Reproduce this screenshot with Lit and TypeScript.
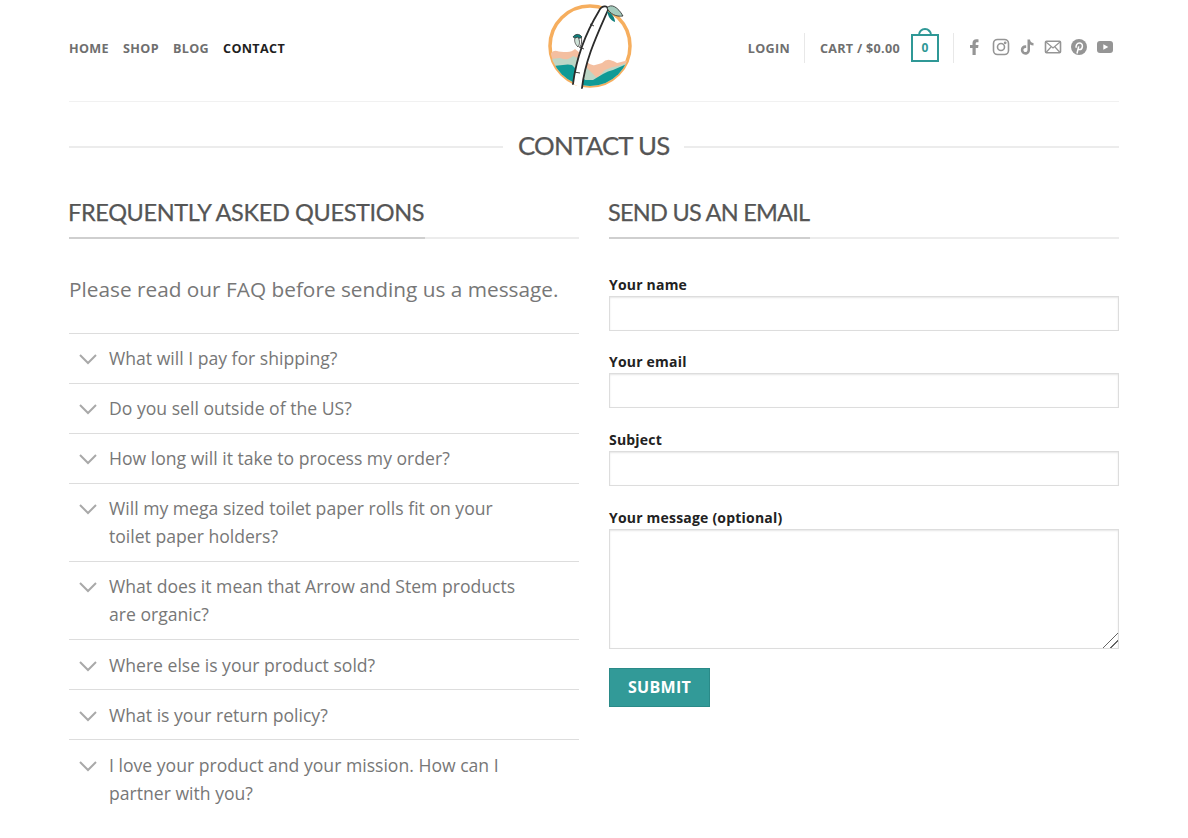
import { LitElement, html, css, svg } from 'lit';
import { customElement } from 'lit/decorators.js';

const FAQ = [
  ['What will I pay for shipping?'],
  ['Do you sell outside of the US?'],
  ['How long will it take to process my order?'],
  ['Will my mega sized toilet paper rolls fit on your', 'toilet paper holders?'],
  ['What does it mean that Arrow and Stem products', 'are organic?'],
  ['Where else is your product sold?'],
  ['What is your return policy?'],
  ['I love your product and your mission. How can I', 'partner with you?'],
];

const FIELDS = ['Your name', 'Your email', 'Subject'];

const logo = svg`
  <svg width="86" height="92" viewBox="0 0 86 92">
    <defs><clipPath id="disc"><circle cx="43" cy="46" r="40"/></clipPath></defs>
    <circle cx="43" cy="46" r="40" fill="#fff" stroke="#f6ae5e" stroke-width="3.5"/>
    <g clip-path="url(#disc)">
      <path d="M4 53 Q7 50 10 51 T20 52 Q25 52 28 49 L33 53 L40 62 Q44 66 48 65 T55 63 Q59 59 63 60 T70 63 L82 60 V92 H0Z" fill="#f4bfa0"/>
      <path d="M4 59 L13 58 Q18 60 21 59 T26 56 L33 59 L40 68 L50 78 L58 70 Q64 67 71 66 L82 62 V92 H0Z" fill="#bcd6c6"/>
      <path d="M6 66 L16 65 Q21 64 25 65 L30 70 L38 80 L46 80 L56 74 Q61 71 66 70 L82 63 V92 H0Z" fill="#0f9a96"/>
    </g>
    <path d="M26 84 C29 60 38 34 52 11 C54 6 61 4 61 10 C50 35 38 60 35 88 Z" fill="#fff"/>
    <path d="M26 84 C29 60 38 34 52 11 C54 6 61 4 61 10 C50 35 38 60 35 88" fill="none" stroke="#2b2b2b" stroke-width="1.800" stroke-linecap="round"/>
    <path d="M43 24 L47 26 M32 47 L37 49 M27 72 L33 73" stroke="#2b2b2b" stroke-width=".9"/>
    <path d="M60 8 C64 3 71 7 76 16 C69 17 63 14 60 8Z" fill="#a5cbbd" stroke="#2b2b2b" stroke-width=".8"/>
    <path d="M60 11 C65 13 68 18 68 22 C63 20 61 16 60 11Z" fill="#0f7f7c"/>
    <path d="M35 37 C32 33 28 34 26 37 C29 39 32 39 35 37Z" fill="#0f7f7c" stroke="#2b2b2b" stroke-width=".7"/>
    <path d="M28 38 C27 41 28 44 31 47 C33 44 33 41 31 37Z" fill="#cfe2d8" stroke="#2b2b2b" stroke-width=".7"/>
    <path d="M33 47 C35 44 35 40 34 37" fill="none" stroke="#2b2b2b" stroke-width=".8"/>
  </svg>`;

@customElement('app-root')
export class AppRoot extends LitElement {
  static styles = css`
    :host {
      display: block;
      height: 838px;
      overflow: hidden;
      background: #fff;
      font-family: 'Open Sans', 'Noto Sans', sans-serif;
      color: #777;
    }

    .page {
      width: 1050px;
      margin-left: 69px;
    }

    .header {
      height: 101px;
      border-bottom: 1px solid #f1f1f1;
      display: grid;
      grid-template-columns: 1fr 100px 1fr;
      align-items: center;
    }

    .nav {
      display: flex;
      gap: 14px;
      font-size: 12.6px;
      font-weight: 700;
      letter-spacing: 0.35px;
      color: #6f6f6f;
      margin-top: -4px;
    }

    .nav .active {
      color: #1f1f1f;
    }

    .logo {
      display: flex;
      justify-content: center;
      margin-top: -9px;
      margin-left: -8px;
    }

    .right {
      display: flex;
      align-items: center;
      justify-content: flex-end;
      margin-top: -6px;
      margin-right: 5px;
      font-size: 12.6px;
      font-weight: 700;
      letter-spacing: 0.3px;
      color: #6f6f6f;
      white-space: nowrap;
    }

    .label {
      margin-top: 2px;
    }

    .divider {
      width: 1px;
      height: 30px;
      background: #e8e8e8;
      margin: 0 15px 0 14px;
    }

    .divider.second {
      margin: 0 12px 0 14px;
    }

    .cart-icon {
      position: relative;
      width: 28px;
      height: 28px;
      border: 2px solid #2f9896;
      box-sizing: border-box;
      margin-left: 11px;
      display: flex;
      align-items: center;
      justify-content: center;
      color: #2f9896;
      font-size: 12px;
      letter-spacing: 0;
    }

    .cart-icon::before {
      content: '';
      position: absolute;
      left: 5px;
      top: -8px;
      width: 10px;
      height: 6px;
      border: 2px solid #2f9896;
      border-bottom: 0;
      border-radius: 7px 7px 0 0;
    }

    .social {
      display: flex;
      align-items: center;
      gap: 8px;
      margin-top: -2px;
    }

    .social svg {
      display: block;
      width: 18px;
      height: 18px;
    }

    .title {
      display: flex;
      align-items: center;
      gap: 15px;
      margin: 25px 0 0;
      height: 36px;
      font-family: 'Lato', sans-serif;
      font-weight: 400;
      font-size: 25.8px;
      letter-spacing: -0.75px;
      color: #555;
      white-space: nowrap;
      -webkit-text-stroke: 0.25px #555;
    }

    .title::before,
    .title::after {
      content: '';
      height: 2px;
      background: #ececec;
      margin-top: 4px;
    }

    .title::before {
      flex: none;
      width: 434px;
    }

    .title::after {
      flex: 1;
    }

    .columns {
      display: grid;
      grid-template-columns: 510px 510px;
      gap: 30px;
      margin-top: 29px;
    }

    .section-title {
      border-bottom: 2px solid #ececec;
      height: 45px;
    }

    .section-title span {
      display: inline-block;
      height: 45px;
      line-height: 40px;
      padding-right: 1px;
      border-bottom: 2px solid #cfcfcf;
      font-family: 'Lato', sans-serif;
      font-size: 23.5px;
      letter-spacing: -0.8px;
      color: #555;
      white-space: nowrap;
      text-indent: -1px;
      -webkit-text-stroke: 0.25px #555;
    }

    .section-title span.wide {
      letter-spacing: -0.36px;
    }

    .section-title span.tight {
      letter-spacing: -0.74px;
    }

    .lead {
      font-size: 20.8px;
      line-height: 32px;
      color: #777;
      margin: 34px 0 28px;
      white-space: nowrap;
    }

    .faq-row {
      display: flex;
      border-top: 1px solid #ddd;
      padding: 10px 0 11px;
      font-size: 17.6px;
      line-height: 28px;
      color: #777;
    }

    .faq-row:nth-child(n + 8) {
      padding: 11px 0 10px;
    }

    .faq-row svg {
      width: 20px;
      height: 12px;
      margin: 9px 11px 0 9px;
      flex: none;
    }

    .faq-row div {
      white-space: nowrap;
    }

    form {
      display: block;
      margin-top: 36px;
    }

    label {
      display: block;
      font-size: 14px;
      font-weight: 700;
      line-height: 20px;
      letter-spacing: 0.2px;
      color: #222;
      margin-bottom: 1px;
    }

    input,
    textarea {
      display: block;
      width: 100%;
      box-sizing: border-box;
      border: 1px solid #ddd;
      box-shadow: inset 0 1px 2px rgba(0, 0, 0, 0.1);
      background: #fff;
      border-radius: 0;
      margin: 0;
      padding: 0 10px;
      outline: none;
    }

    input {
      height: 35px;
      margin-bottom: 22px;
    }

    .field:first-child input {
      margin-bottom: 21px;
    }

    textarea {
      height: 120px;
      resize: vertical;
    }

    textarea::-webkit-resizer {
      background: linear-gradient(
        135deg,
        transparent 0 48%,
        #666 48% 53%,
        transparent 53% 72%,
        #666 72% 77%,
        transparent 77%
      );
    }

    button {
      display: block;
      margin-top: 19px;
      width: 101px;
      height: 39px;
      border: 1px solid #2a8a88;
      background: #329a98;
      color: #fff;
      font-family: inherit;
      font-size: 16px;
      font-weight: 700;
      letter-spacing: 0.3px;
      padding: 0 0 2px;
    }
  `;

  render() {
    return html`
      <div class="page">
        <header class="header">
          <nav class="nav">
            <span>HOME</span><span>SHOP</span><span>BLOG</span><span class="active">CONTACT</span>
          </nav>
          <div class="logo">${logo}</div>
          <div class="right">
            <span class="label">LOGIN</span>
            <span class="divider"></span>
            <span class="label">CART / $0.00</span>
            <span class="cart-icon">0</span>
            <span class="divider second"></span>
            <div class="social">
              <svg viewBox="0 0 18 18" fill="#959595"><path d="M6.500 17V10H4V7H6.500V5C6.500 2.800 8 1.300 10.300 1.300c1 0 1.900.1 2.200.1v2.800h-1.500C10 4.200 9.700 4.800 9.700 5.600V7h2.800l-.4 3H9.700v7Z"/></svg>
              <svg viewBox="0 0 18 18" fill="none" stroke="#959595" stroke-width="1.600"><rect x="1.500" y="1.500" width="15" height="15" rx="4"/><circle cx="9" cy="9" r="3.500"/><circle cx="13.200" cy="4.800" r=".6" fill="#959595"/></svg>
              <svg viewBox="0 0 18 18" fill="#959595"><path d="M9.500 1.500h2.500c.2 2 1.500 3.400 3.500 3.600v2.500c-1.300 0-2.500-.4-3.500-1.100v5.400c0 2.900-2.100 4.800-4.700 4.800C4.800 16.700 2.800 14.700 2.800 12c0-2.900 2.400-5 5.400-4.600v2.700c-1.500-.4-2.800.6-2.800 1.900 0 1.200.9 2.100 2 2.100 1.200 0 2.100-.8 2.100-2.300Z"/></svg>
              <svg viewBox="0 0 18 18" fill="none" stroke="#959595" stroke-width="1.600"><rect x="1.500" y="3.200" width="15" height="11.600" rx="1"/><path d="M2 4l7 6 7-6M2 14.500l5-5.500M16 14.500L11 9" stroke-width="1.200"/></svg>
              <svg viewBox="0 0 18 18"><circle cx="9" cy="9" r="8" fill="#959595"/><path d="M7 15.500l1.700-7.200M6.300 9.800C5.400 7.500 7 5 9.400 5c2 0 3.200 1.400 3 3.300-.2 1.900-1.300 3.300-2.800 3.300-.8 0-1.400-.5-1.500-1" fill="none" stroke="#fff" stroke-width="1.500"/></svg>
              <svg viewBox="0 0 18 18"><rect x="1" y="3" width="16" height="12" rx="3" fill="#959595"/><path d="M7.300 6.200l5 2.800-5 2.800Z" fill="#fff"/></svg>
            </div>
          </div>
        </header>

        <h1 class="title">CONTACT US</h1>

        <div class="columns">
          <section>
            <div class="section-title"><span class="wide">FREQUENTLY ASKED QUESTIONS</span></div>
            <p class="lead">Please read our FAQ before sending us a message.</p>
            ${FAQ.map(
              (q) => html`
                <div class="faq-row">
                  <svg viewBox="0 0 20 12" fill="none" stroke="#a9a9a9" stroke-width="2"><path d="M2 2l8 8 8-8"/></svg>
                  <div>${q.map((line) => html`${line}<br />`)}</div>
                </div>
              `
            )}
          </section>
          <section>
            <div class="section-title"><span class="tight">SEND US AN EMAIL</span></div>
            <form>
              ${FIELDS.map(
                (f) => html`<div class="field"><label>${f}</label><input type="text" /></div>`
              )}
              <div class="field"><label>Your message (optional)</label><textarea></textarea></div>
              <button type="button">SUBMIT</button>
            </form>
          </section>
        </div>
      </div>
    `;
  }
}
